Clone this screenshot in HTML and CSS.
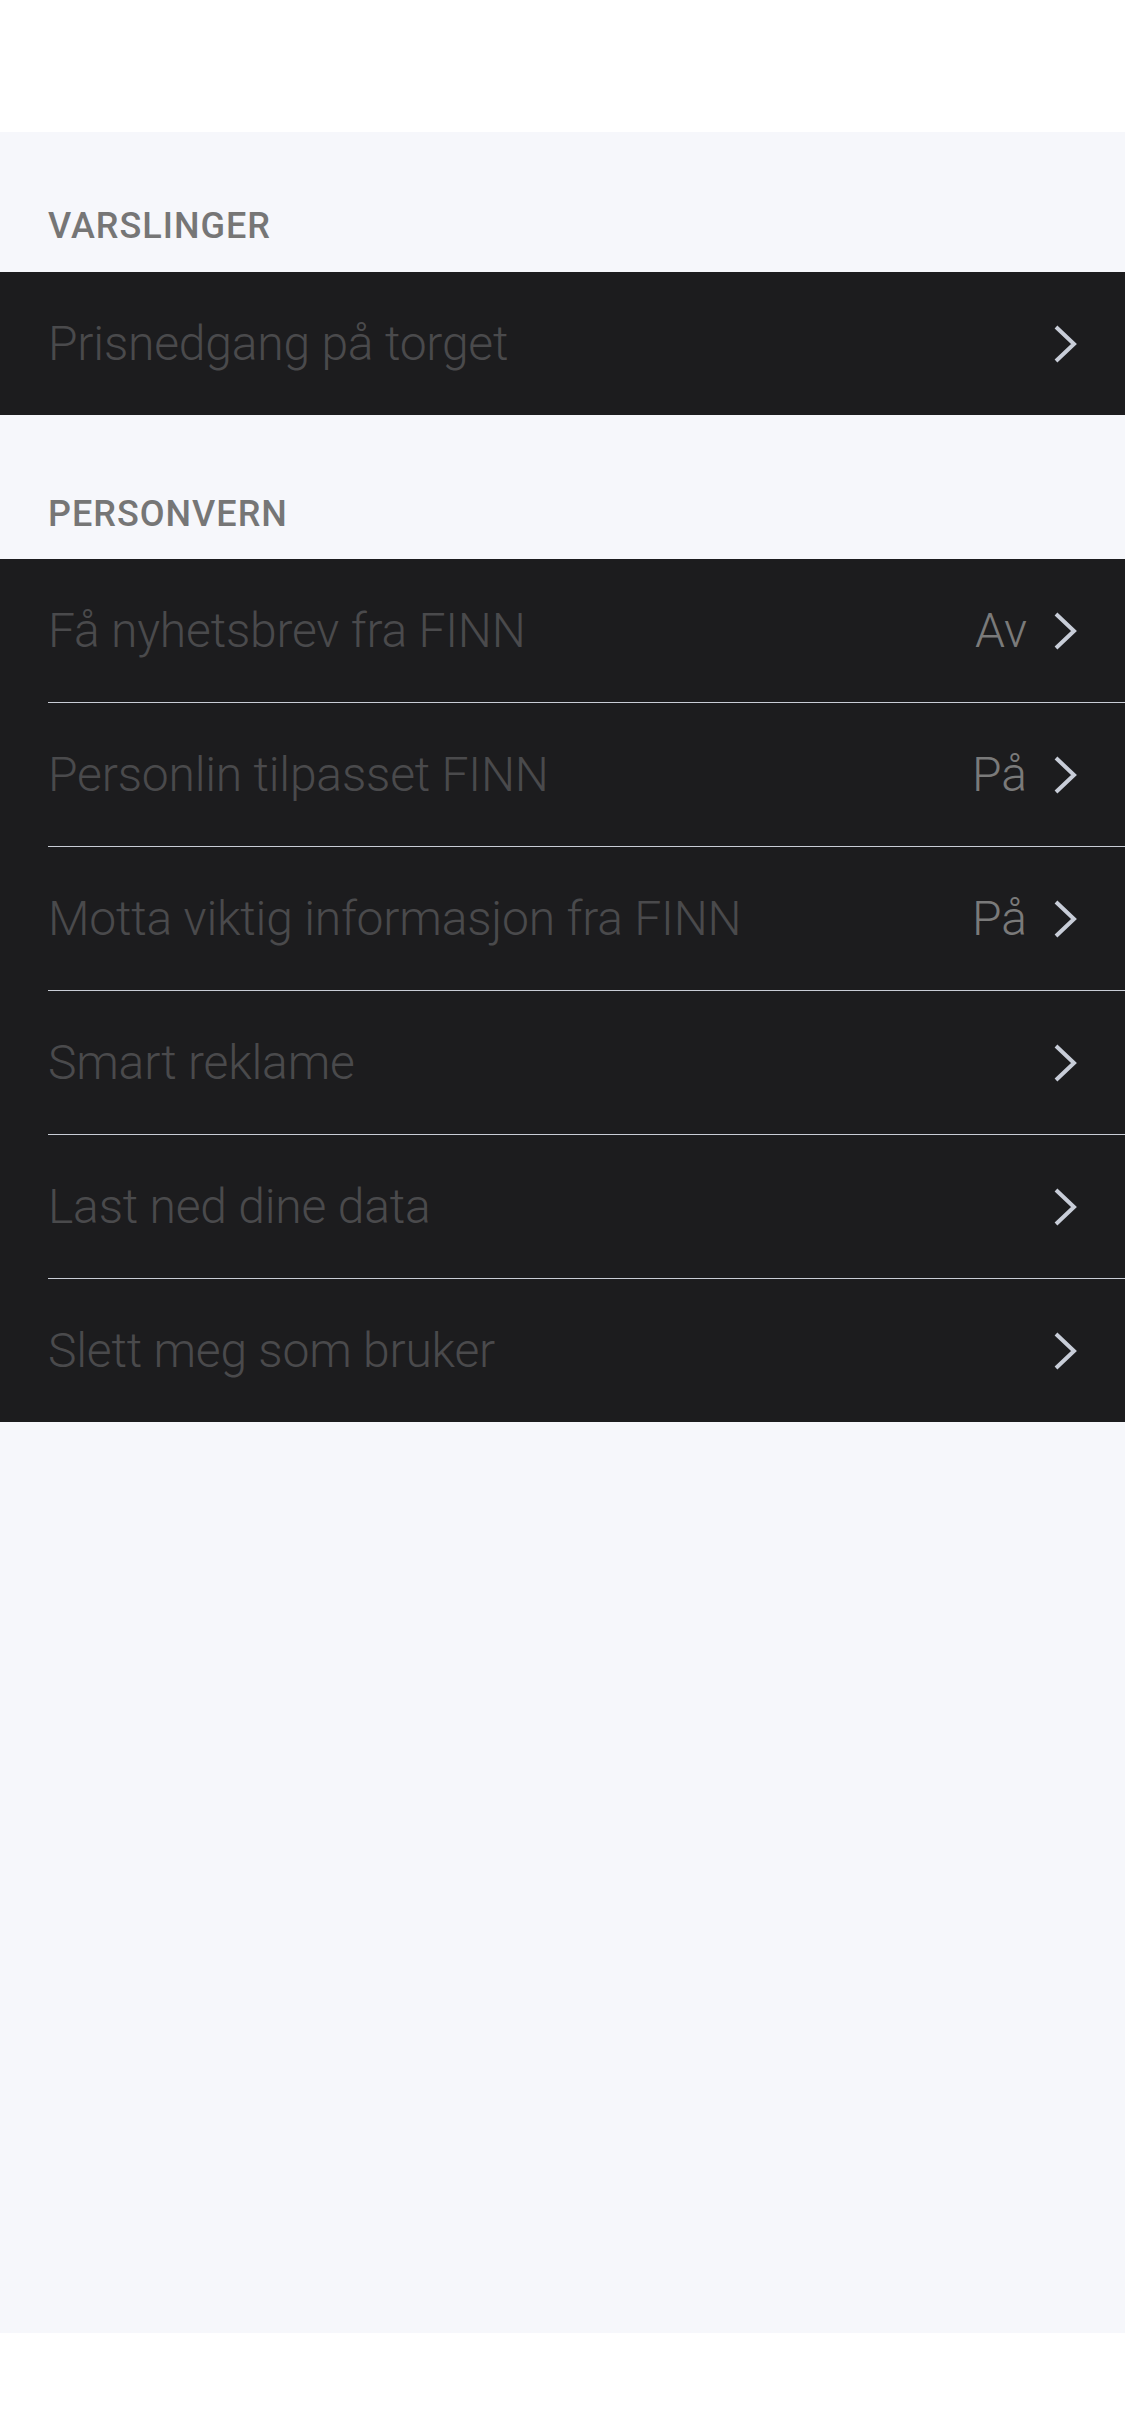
FILE: index.html
```html
<!DOCTYPE html>
<html lang="no">
<head>
<meta charset="utf-8">
<title>Innstillinger</title>
<link rel="stylesheet" href="styles.css">
</head>
<body>
<div class="screen">
  <div class="topbar"></div>
  <main class="content">
    <section class="group">
      <h2 class="group-title">VARSLINGER</h2>
      <ul class="list">
        <li class="row"><span class="label">Prisnedgang på torget</span><span class="trail"><svg class="chev" viewBox="0 0 24 38"><path d="M3 2 L21 19 L3 36"/></svg></span></li>
      </ul>
    </section>
    <section class="group">
      <h2 class="group-title">PERSONVERN</h2>
      <ul class="list">
        <li class="row"><span class="label">Få nyhetsbrev fra FINN</span><span class="trail"><span class="value">Av</span><svg class="chev" viewBox="0 0 24 38"><path d="M3 2 L21 19 L3 36"/></svg></span></li>
        <li class="row"><span class="label">Personlin tilpasset FINN</span><span class="trail"><span class="value">På</span><svg class="chev" viewBox="0 0 24 38"><path d="M3 2 L21 19 L3 36"/></svg></span></li>
        <li class="row"><span class="label">Motta viktig informasjon fra FINN</span><span class="trail"><span class="value">På</span><svg class="chev" viewBox="0 0 24 38"><path d="M3 2 L21 19 L3 36"/></svg></span></li>
        <li class="row"><span class="label">Smart reklame</span><span class="trail"><svg class="chev" viewBox="0 0 24 38"><path d="M3 2 L21 19 L3 36"/></svg></span></li>
        <li class="row"><span class="label">Last ned dine data</span><span class="trail"><svg class="chev" viewBox="0 0 24 38"><path d="M3 2 L21 19 L3 36"/></svg></span></li>
        <li class="row"><span class="label">Slett meg som bruker</span><span class="trail"><svg class="chev" viewBox="0 0 24 38"><path d="M3 2 L21 19 L3 36"/></svg></span></li>
      </ul>
    </section>
  </main>
  <div class="bottombar"></div>
</div>
</body>
</html>
```

FILE: styles.css
```css
* { box-sizing: border-box; }
html, body { margin: 0; padding: 0; background: #ffffff; }
body { font-family: Roboto, "Liberation Sans", sans-serif; }

.screen {
  width: 1125px;
  height: 2436px;
  display: flex;
  flex-direction: column;
}
.topbar { height: 132px; background: #ffffff; flex: none; }
.content {
  flex: 1;
  background: #f6f7fb;
}
.bottombar { height: 103px; background: #ffffff; flex: none; }

.group-title {
  margin: 0;
  height: 140px;
  padding: 0 0 0 48px;
  display: flex;
  align-items: flex-end;
  padding-bottom: 28px;
  font-size: 36px;
  font-weight: 500;
  color: #767676;
  letter-spacing: 1px;
  line-height: 1;
}
.group + .group .group-title { height: 144px; padding-bottom: 27px; }

.list {
  list-style: none;
  margin: 0;
  padding: 0;
  background: #1c1c1e;
}
.row {
  height: 144px;
  margin-left: 48px;
  padding-right: 48px;
  display: flex;
  align-items: center;
  justify-content: space-between;
  border-top: 1px solid #c9cdd6;
}
.row:first-child { border-top: none; height: 143px; }
.label {
  font-size: 48px;
  font-weight: 300;
  color: #4a4a4c;
  letter-spacing: -0.2px;
}
.trail {
  display: flex;
  align-items: center;
  gap: 26px;
}
.value {
  font-size: 48px;
  font-weight: 300;
  color: #7a7a7a;
}
.chev {
  width: 24px;
  height: 38px;
  display: block;
}
.chev path {
  fill: none;
  stroke: #c8cdd8;
  stroke-width: 4;
}
```
